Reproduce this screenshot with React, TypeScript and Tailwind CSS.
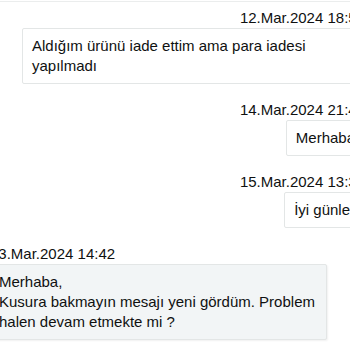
type Message = {
	id: number;
	side: "me" | "them";
	time: string;
	lines: string[];
};

const messages: Message[] = [
	{ id: 1, side: "me", time: "12.Mar.2024 18:52", lines: ["Aldığım ürünü iade ettim ama para iadesi yapılmadı"] },
	{ id: 2, side: "me", time: "14.Mar.2024 21:40", lines: ["Merhaba"] },
	{ id: 3, side: "me", time: "15.Mar.2024 13:30", lines: ["İyi günler"] },
	{
		id: 4,
		side: "them",
		time: "13.Mar.2024 14:42",
		lines: ["Merhaba,", "Kusura bakmayın mesajı yeni gördüm. Problem halen devam etmekte mi ?"],
	},
];

function Bubble({ message }: { message: Message }) {
	const mine = message.side === "me";

	return (
		<div className={mine ? "flex flex-col items-end" : "flex flex-col items-start"}>
			<span className="whitespace-nowrap text-[15px] leading-5">{message.time}</span>

			<div
				className={
					mine
						? "max-w-[343px] rounded-[2px] border border-[#e3e6e6] bg-white px-[9px] py-[7px]"
						: `max-w-[337px] rounded-[2px] border border-[#e3e6e6] bg-[#f2f5f6] px-[8px] py-[7px]
							shadow-[1px_1px_2px_rgba(0,0,0,0.06)]`
				}
			>
				{message.lines.map((line) => (
					<p key={line} className="text-[15px] leading-5">
						{line}
					</p>
				))}
			</div>
		</div>
	);
}

function App() {
	return (
		<div className="h-[350px] w-[350px] overflow-hidden bg-white font-['Liberation_Sans',Arial,sans-serif] text-[#0f1111]">
			<div className="pt-px">
				<div className="h-px bg-[#ebeded]" />
			</div>

			<div className="ml-[-10px] mt-[6px] flex w-[375px] flex-col gap-[16px]">
				{messages.map((message) => (
					<Bubble key={message.id} message={message} />
				))}
			</div>
		</div>
	);
}

export default App;
